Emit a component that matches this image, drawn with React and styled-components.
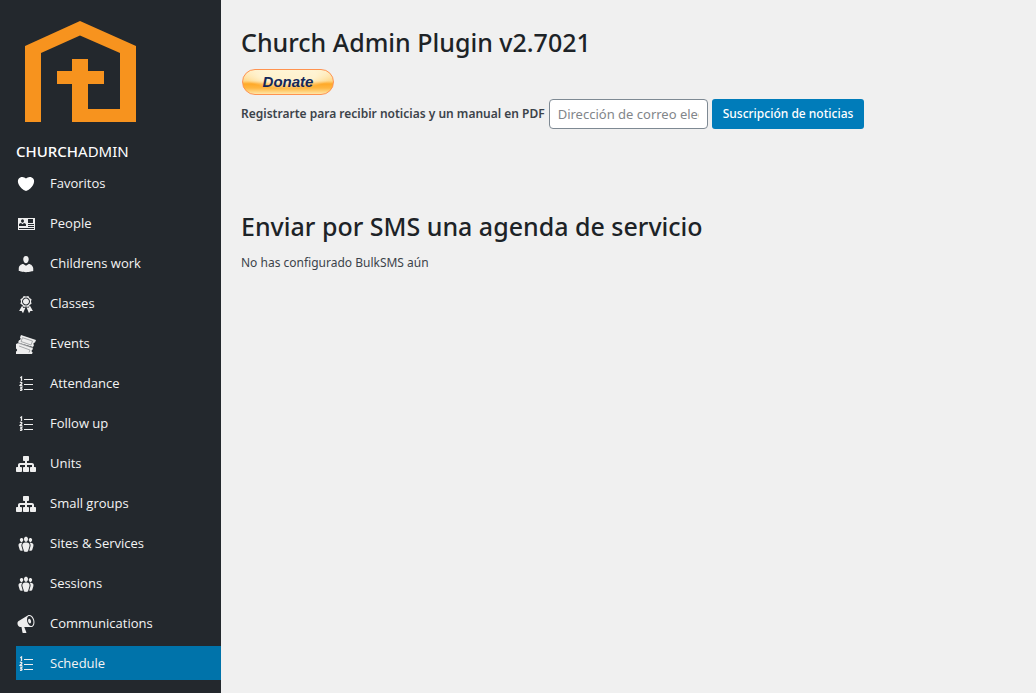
import React from "react";
import styled, { createGlobalStyle } from "styled-components";

const GlobalStyle = createGlobalStyle`
  *, *::before, *::after { box-sizing: border-box; }
  body {
    margin: 0;
    background: #f0f0f0;
    color: #3c434a;
    font-family: "Noto Sans", "Open Sans", sans-serif;
    font-size: 12px;
    line-height: 20px;
  }
`;

const Page = styled.div`
  display: flex;
  min-height: 100vh;
`;

const Sidebar = styled.aside`
  flex: none;
  width: 221px;
  padding: 16px 0 12px 16px;
  background: #23282d;
  color: #f4f4f4;
`;

const Logo = styled.svg`
  display: block;
  width: 128px;
  height: 112px;
`;

const Brand = styled.div`
  margin-top: 13px;
  font-size: 15px;
  line-height: 20px;
  color: #fff;
`;

const BrandStrong = styled.span`
  font-weight: 500;
`;

const Menu = styled.ul`
  display: grid;
  gap: 6px;
  margin: 5px 0 0;
  padding: 0;
  list-style: none;
`;

const MenuLink = styled.a`
  display: flex;
  align-items: center;
  gap: 14px;
  height: 34px;
  font-family: "Open Sans", "Noto Sans", sans-serif;
  font-size: 13px;
  color: #f4f4f4;
  text-decoration: none;
  background: ${(p) => (p.$active ? "#0073aa" : "transparent")};
`;

const MenuIcon = styled.svg`
  flex: none;
  width: 20px;
  height: 20px;
  margin-top: 2px;
  fill: ${(p) => (p.$bright ? "#fff" : "#eee")};
`;

const Main = styled.main`
  flex: 1;
  min-width: 0;
  padding: 27px 20px;
`;

const Heading = styled.h1`
  margin: 0;
  font-size: 25px;
  font-weight: 500;
  line-height: 30px;
  color: #1d2327;
`;

const SectionHeading = styled(Heading).attrs({ as: "h2" })`
  margin-top: 82px;
`;

const DonateButton = styled.button`
  display: block;
  width: 92px;
  height: 26px;
  margin: 12px 0 0 1px;
  padding: 0;
  border: 1px solid #ff9350;
  border-radius: 13px;
  background:
    radial-gradient(ellipse 46px 14px at 50% 20%, rgba(255, 245, 215, 0.85) 60%, rgba(255, 245, 215, 0) 100%),
    linear-gradient(#fff0c8 0%, #ffd98c 45%, #ffa928 58%, #ffb640 75%, #ffe6a8 100%);
  color: #14285a;
  font: italic bold 15px/24px "Liberation Sans", Arial, sans-serif;
`;

const SignupForm = styled.form`
  display: flex;
  flex-wrap: wrap;
  align-items: center;
  gap: 4px;
  margin-top: 4px;
`;

const SignupLabel = styled.label`
  font-size: 12px;
  font-weight: 600;
  line-height: 20px;
`;

const EmailInput = styled.input`
  width: 159px;
  height: 30px;
  padding: 0 8px;
  border: 1px solid #7e8993;
  border-radius: 4px;
  background: #fff;
  color: #32373c;
  font: 13px/28px "Noto Sans", "Open Sans", sans-serif;
  &::placeholder { color: #82868a; opacity: 1; }
`;

const SubmitButton = styled.button`
  height: 30px;
  padding: 0 11px;
  border: 0;
  border-radius: 3px;
  background: #007cba;
  color: #fff;
  font: 500 12px/30px "Noto Sans", "Open Sans", sans-serif;
  white-space: nowrap;
`;

const Notice = styled.p`
  margin: 12px 0 0;
  font-size: 12px;
  line-height: 20px;
`;

const numbered = (
  <>
    <path d="M8 5h9v1H8zM8 10h9v1H8zM8 15h9v1H8z" />
    <path
      d="M4.200 3.800l1.300-.8V7M4 8.700c.6-.7 2.100-.5 1.900.5C5.800 10 4.500 10.400 4.100 11.300H6.400M4.100 13.200h1.800L4.900 14.600c1.700 0 1.600 2.200-.9 1.700"
      fill="none"
      stroke="#eee"
      strokeWidth="1.300"
    />
  </>
);

const network = (
  <path d="M18 13h1c.55 0 1 .45 1 1.010v2.980c0 .56-.45 1.010-1 1.010h-4c-.55 0-1-.45-1-1.010v-2.980c0-.56.45-1.010 1-1.010h1v-2h-5v2h1c.55 0 1 .45 1 1.010v2.980c0 .56-.45 1.010-1 1.010H8c-.55 0-1-.45-1-1.010v-2.980c0-.56.45-1.010 1-1.010h1v-2H4v2h1c.55 0 1 .45 1 1.010v2.980C6 17.550 5.550 18 5 18H1c-.55 0-1-.45-1-1.010v-2.980C0 13.450.45 13 1 13h1v-2c0-1.100.9-2 2-2h5V7H8c-.55 0-1-.45-1-1.010V3.010C7 2.450 7.450 2 8 2h4c.55 0 1 .45 1 1.010v2.980C13 6.550 12.550 7 12 7h-1v2h5c1.100 0 2 .9 2 2v2z" />
);

const groups = (
  <path d="M8.03 4.46c-.29 1.28.55 3.46 1.97 3.46 1.41 0 2.25-2.18 1.96-3.46-.22-.98-1.08-1.63-1.96-1.63-.89 0-1.74.65-1.97 1.63zm-4.13.9c-.25 1.08.47 2.93 1.67 2.93s1.92-1.85 1.67-2.93c-.19-.83-.92-1.39-1.67-1.39s-1.48.56-1.67 1.39zm8.86 0c-.25 1.08.47 2.93 1.66 2.93 1.2 0 1.92-1.85 1.67-2.93-.19-.83-.92-1.39-1.67-1.39-.74 0-1.47.56-1.66 1.39zm-.59 11.43l1.25-4.3C14.2 10 12.71 8.47 10 8.47c-2.72 0-4.21 1.53-3.44 4.02l1.26 4.3C8.05 17.51 9 18 10 18c.98 0 1.94-.49 2.17-1.21zm-6.1-7.63c-.49.67-.96 1.83-.42 3.59l1.12 3.79c-.34.2-.77.31-1.2.31-.85 0-1.65-.41-1.85-1.03l-1.07-3.65c-.65-2.11.61-3.4 2.92-3.4.27 0 .54.02.79.06-.1.1-.2.22-.29.33zm8.35-.39c2.31 0 3.58 1.29 2.92 3.4l-1.07 3.65c-.2.62-1 1.03-1.85 1.03-.43 0-.86-.11-1.2-.31l1.11-3.77c.55-1.78.08-2.94-.42-3.61-.08-.11-.18-.23-.28-.33.25-.04.51-.06.79-.06z" />
);

const icons = {
  heart: (
    <path d="M10 17.12c3.33-1.4 5.74-3.79 7.04-6.21 1.28-2.41 1.46-4.81.32-6.25-1.03-1.29-2.37-1.78-3.73-1.74s-2.68.63-3.63 1.46c-.95-.83-2.27-1.42-3.63-1.46s-2.7.45-3.73 1.74c-1.14 1.44-.96 3.84.34 6.25 1.28 2.42 3.69 4.81 7.02 6.21z" />
  ),
  card: (
    <path
      fillRule="evenodd"
      d="M2 4h17v12H2zM6.500 5.300a1.500 1.700 0 1 0 .01 0zM3 12h7V10.600C10 9.500 8.800 9.200 8 9L6.500 10.200 5 9C4 9.200 3 9.500 3 10.600zM12 5h5v4h-5zM12 10h6v1h-6zM12 12h6v1h-6zM3 14h15v1H3z"
    />
  ),
  person: (
    <path d="M10 9.250c-2.270 0-2.730-3.440-2.730-3.440C7 4.020 7.820 2 9.970 2c2.160 0 2.980 2.020 2.710 3.810 0 0-.41 3.440-2.680 3.440zm0 2.570L12.720 10c2.390 0 4.520 2.330 4.520 4.530v2.490s-3.650 1.130-7.240 1.130c-3.650 0-7.240-1.130-7.240-1.130v-2.490c0-2.250 1.940-4.480 4.470-4.480z" />
  ),
  award: (
    <path d="M4.46 5.16L5 7.46l-.54 2.29 2.01 1.24L7.7 13l2.3-.54 2.3.54 1.23-2.01 2.01-1.24L15 7.46l.54-2.3-2-1.24-1.24-2.01-2.3.55-2.29-.54-1.25 2zm5.55 6.34c-2.21 0-4-1.79-4-4 0-2.2 1.79-4 4-4 2.2 0 4 1.8 4 4 0 2.21-1.8 4-4 4zm-.02-1C8.33 10.5 7 9.16 7 7.5c0-1.65 1.33-3 2.99-3S13 5.85 13 7.5c0 1.66-1.35 3-3.01 3zm3.84 1.1l-1.28 2.24-2.08-.47L13 19.2l1.4-2.2h2.5zm-7.7.07l1.25 2.25 2.13-.51L7 19.2 5.6 17H3.1z" />
  ),
  tickets: (
    <>
      <path d="M5 1l15 5-1 2.500c-1.500 0-2.200 1.500-1 2.500l-1 2L2 8.500l1-2.300c1.500 0 2.200-1.700 1-2.700z" />
      <path d="M0 10l3-1.200 14 5-.5 2c-1.300.5-1.300 2 .2 2.700L16 20H0v-2.500c1.500-.5 1.500-2.200 0-3z" />
      <path d="M6.500 3.700l10 3.300-1.500 4L5 7.500zM3 12l11 4-1 2.500M2 9l15 5" fill="none" stroke="#777b7e" strokeWidth=".6" />
    </>
  ),
  numbered,
  network,
  groups,
  megaphone: (
    <path d="M18.15 5.94c.46 1.62.38 3.22-.02 4.48-.42 1.28-1.26 2.18-2.3 2.48-.16.06-.26.06-.4.06-.06.02-.12.02-.18.02-.06.02-.14.02-.22.02h-6.8l2.22 5.5c.02.14-.06.26-.14.34-.08.1-.24.16-.34.16H6.95c-.1 0-.26-.06-.34-.16-.08-.08-.16-.2-.14-.34l-1-5.5H4.25l-.02-.02c-.5.06-1.08-.18-1.54-.62s-.88-1.08-1.06-1.88c-.24-.8-.2-1.56-.02-2.2.18-.62.58-1.08 1.06-1.3l.02-.02 9-5.4c.1-.06.18-.1.24-.16.06-.04.14-.08.24-.12.16-.08.28-.12.5-.18 1.04-.3 2.24.1 3.22.98s1.84 2.24 2.26 3.86zm-2.58 5.98h-.02c.4-.1.74-.34 1.04-.7.58-.7.86-1.76.86-3.04 0-.64-.1-1.3-.28-1.98-.34-1.36-1.02-2.5-1.78-3.24s-1.68-1.1-2.46-.88c-.82.22-1.4.96-1.7 2-.32 1.04-.28 2.36.06 3.72.38 1.36 1 2.5 1.8 3.24.78.74 1.62 1.1 2.48.88zm-2.54-7.08c.22-.04.42-.02.62.04.38.16.76.48 1.02 1s.42 1.2.42 1.78c0 .3-.04.56-.12.8-.18.48-.44.84-.86.94-.34.1-.8-.06-1.14-.4s-.64-.86-.78-1.5c-.18-.62-.12-1.24.02-1.72s.48-.84.82-.94z" />
  ),
};

const items = [
  { label: "Favoritos", icon: "heart", bright: true },
  { label: "People", icon: "card" },
  { label: "Childrens work", icon: "person" },
  { label: "Classes", icon: "award" },
  { label: "Events", icon: "tickets" },
  { label: "Attendance", icon: "numbered" },
  { label: "Follow up", icon: "numbered" },
  { label: "Units", icon: "network" },
  { label: "Small groups", icon: "network" },
  { label: "Sites & Services", icon: "groups" },
  { label: "Sessions", icon: "groups" },
  { label: "Communications", icon: "megaphone" },
  { label: "Schedule", icon: "numbered", active: true },
];

export default function App() {
  return (
    <>
      <GlobalStyle />
      <Page>
        <Sidebar>
          <Logo viewBox="0 0 128 112" aria-hidden="true">
            <path
              fill="#f7931e"
              d="M9 106V30L64 5l56 25v76H56V68H41V55h15V43h16v12h16v13H72v25h32V37L64 19.500 25 37v69z"
            />
          </Logo>
          <Brand>
            <BrandStrong>CHURCH</BrandStrong>ADMIN
          </Brand>
          <nav>
            <Menu>
              {items.map((item) => (
                <li key={item.label}>
                  <MenuLink href="#" $active={item.active} aria-current={item.active ? "page" : undefined}>
                    <MenuIcon viewBox="0 0 20 20" $bright={item.bright} aria-hidden="true">
                      {icons[item.icon]}
                    </MenuIcon>
                    {item.label}
                  </MenuLink>
                </li>
              ))}
            </Menu>
          </nav>
        </Sidebar>
        <Main>
          <Heading>Church Admin Plugin v2.7021</Heading>
          <DonateButton type="button">Donate</DonateButton>
          <SignupForm onSubmit={(e) => e.preventDefault()}>
            <SignupLabel htmlFor="email">Registrarte para recibir noticias y un manual en PDF</SignupLabel>
            <EmailInput id="email" type="email" placeholder="Dirección de correo electrónico" />
            <SubmitButton type="submit">Suscripción de noticias</SubmitButton>
          </SignupForm>
          <SectionHeading>Enviar por SMS una agenda de servicio</SectionHeading>
          <Notice>No has configurado BulkSMS aún</Notice>
        </Main>
      </Page>
    </>
  );
}
